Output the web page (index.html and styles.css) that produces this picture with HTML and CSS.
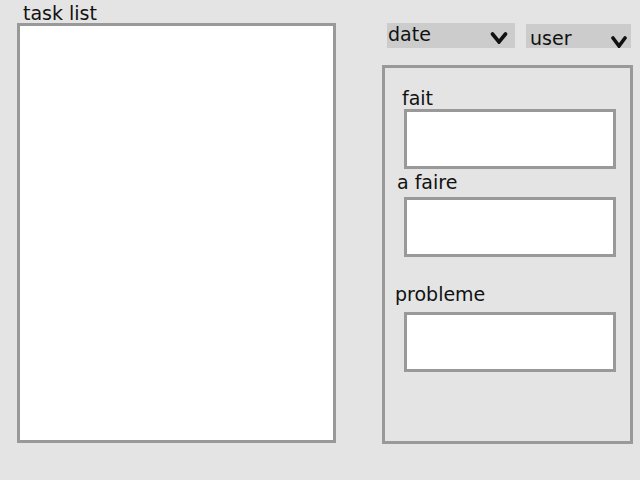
FILE: index.html
```html
<!DOCTYPE html>
<html lang="fr">
<head>
<meta charset="utf-8">
<title>task list</title>
<link rel="stylesheet" href="styles.css">
</head>
<body>
<div class="app">
  <section class="tasks">
    <div class="tasks-label">task list</div>
    <div class="tasks-box"></div>
  </section>
  <section class="side">
    <div class="filters">
      <div class="select select-date">
        <span class="select-text">date</span>
        <svg class="chev" width="18" height="12" viewBox="0 0 18 12"><path d="M2.5 2 L9 10 L15.5 2" fill="none" stroke="#111" stroke-width="3.6" stroke-linejoin="miter" stroke-linecap="round"/></svg>
      </div>
      <div class="select select-user">
        <span class="select-text">user</span>
        <svg class="chev" width="16" height="12" viewBox="0 0 16 12"><path d="M2 2 L8 10 L14 2" fill="none" stroke="#111" stroke-width="3.6" stroke-linejoin="miter" stroke-linecap="round"/></svg>
      </div>
    </div>
    <div class="panel">
      <div class="field field-fait">
        <div class="field-label">fait</div>
        <div class="field-box"></div>
      </div>
      <div class="field field-afaire">
        <div class="field-label">a faire</div>
        <div class="field-box"></div>
      </div>
      <div class="field field-probleme">
        <div class="field-label">probleme</div>
        <div class="field-box"></div>
      </div>
    </div>
  </section>
</div>
</body>
</html>
```
FILE: styles.css
```css
html, body {
  margin: 0;
  padding: 0;
  background: #e4e4e4;
}
body {
  width: 640px;
  height: 480px;
  font-family: "DejaVu Sans", sans-serif;
  font-size: 19px;
  color: #111;
}
.app {
  display: flex;
  padding-left: 17px;
  gap: 46px;
}
.tasks {
  display: flex;
  flex-direction: column;
  padding-top: 3px;
}
.tasks-label {
  line-height: 20px;
  padding-left: 6px;
}
.tasks-box {
  box-sizing: border-box;
  width: 319px;
  height: 420px;
  background: #fff;
  border: 3px solid #999;
}
.side {
  display: flex;
  flex-direction: column;
  padding-top: 23px;
}
.filters {
  display: flex;
  align-items: flex-end;
  gap: 11px;
  padding-left: 5px;
}
.select {
  box-sizing: border-box;
  display: flex;
  align-items: flex-start;
  background: #cccccc;
}
.select-text {
  line-height: 20px;
}
.chev {
  margin-left: auto;
  margin-top: 8px;
}
.select-date {
  width: 128px;
  height: 25px;
  padding: 1px 7px 0 1px;
}
.select-user {
  width: 105px;
  height: 24px;
  padding: 4px 4px 0 4px;
}
.panel {
  box-sizing: border-box;
  width: 251px;
  height: 379px;
  margin-top: 17px;
  border: 3px solid #999;
  display: flex;
  flex-direction: column;
}
.field {
  display: flex;
  flex-direction: column;
}
.field-label {
  line-height: 20px;
}
.field-box {
  box-sizing: border-box;
  width: 212px;
  height: 60px;
  margin-left: 19px;
  background: #fff;
  border: 3px solid #999;
}
.field-fait {
  margin-top: 20px;
}
.field-fait .field-label {
  padding-left: 17px;
  margin-bottom: 1px;
}
.field-afaire {
  margin-top: 3px;
}
.field-afaire .field-label {
  padding-left: 12px;
  margin-bottom: 5px;
}
.field-probleme {
  margin-top: 27px;
}
.field-probleme .field-label {
  padding-left: 10px;
  margin-bottom: 8px;
}
```
